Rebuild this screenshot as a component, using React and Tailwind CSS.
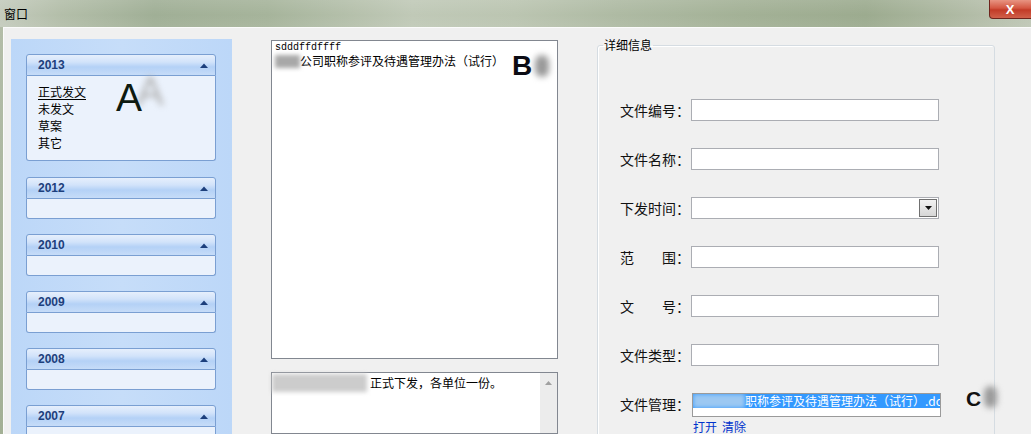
import React from "react";

const cjk = { fontFamily: '"Noto Sans CJK SC", "Liberation Sans", sans-serif' };
const arial = { fontFamily: '"Liberation Sans", Arial, sans-serif' };
const mono = { fontFamily: '"Liberation Mono", "DejaVu Sans Mono", monospace' };

function UpTriangle() {
  return (
    <svg width="8" height="5" viewBox="0 0 8 5">
      <path d="M0 5 L4 0.5 L8 5 Z" fill="#1d3f7c" />
    </svg>
  );
}

function YearGroup({ year, open, className = "" }) {
  return (
    <div className={"flex flex-col " + className}>
      <div className="h-[22px] flex items-center justify-between pl-[11px] pr-[7px] border border-[#7a9fd2] rounded-t-[3px] bg-[linear-gradient(to_bottom,#e6effc_0%,#d2e3fa_35%,#b4d1f6_60%,#c6dcf8_100%)]">
        <span className="text-[12px] font-bold text-[#1d3f7c]" style={arial}>
          {year}
        </span>
        <UpTriangle />
      </div>
      {open ? (
        <div
          className="h-[85px] border border-t-0 border-[#7a9fd2] rounded-b-[3px] bg-[#ebf2fc] pl-[11px] pt-[7px] text-[12px] leading-[17px] text-black flex flex-col relative"
          style={cjk}
        >
          <span className="underline underline-offset-2">正式发文</span>
          <span>未发文</span>
          <span>草案</span>
          <span>其它</span>
          <span className="absolute left-[110px] top-[-5px] text-[40px] leading-none text-[#b0b0b0] blur-[3px]" style={arial}>
            A
          </span>
          <span className="absolute left-[89px] top-[2px] text-[39px] leading-none text-[#0d1a10]" style={arial}>
            A
          </span>
        </div>
      ) : (
        <div className="h-[20px] border border-t-0 border-[#7a9fd2] rounded-b-[3px] bg-[#ebf2fc]" />
      )}
    </div>
  );
}

function Field({ label, children }) {
  return (
    <div className="flex items-center h-[22px]">
      <span className="w-[71px] shrink-0 text-[14px] text-[#111] whitespace-pre" style={cjk}>
        {label}
      </span>
      {children || <div className="w-[248px] h-[22px] border border-[#abadb3] bg-white" />}
    </div>
  );
}

export default function App() {
  return (
    <div className="w-[1031px] h-[434px] overflow-hidden flex flex-col bg-[#f0f0f0] relative">
      {/* title bar */}
      <div className="h-[27px] shrink-0 relative bg-[linear-gradient(to_right,#c4cbbd_0%,#b3bea9_6%,#a0af96_15%,#a6b49b_26%,#c0c9b7_40%,#bbc5b1_50%,#aebaa3_60%,#a3b196_72%,#9cab8f_84%,#adb8a1_92%,#bfc7b6_100%)]">
        <div className="absolute inset-0 bg-[linear-gradient(to_bottom,rgba(255,255,255,0.1),rgba(255,255,255,0)_55%,rgba(255,255,255,0.06))]" />
        <span className="absolute left-[4px] top-[5px] text-[12px] text-black" style={cjk}>
          窗口
        </span>
        <div className="absolute right-[-3px] top-0 w-[45px] h-[19px] rounded-bl-[4px] border border-t-0 border-[#6e241c] bg-[linear-gradient(to_bottom,#e89482_0%,#d45742_45%,#c23b27_55%,#d0604a_100%)] flex items-center justify-center">
          <span className="text-white font-bold text-[13px] leading-none pr-[3px]" style={arial}>
            X
          </span>
        </div>
      </div>

      {/* window body */}
      <div className="flex-1 flex min-h-0">
        <div className="w-[3px] shrink-0 bg-[linear-gradient(to_bottom,#b3bda8,#a3b095)]" />
        <div className="flex-1 flex border-l border-t border-[#fbfbfb] bg-[#f0f0f0] min-h-0">
          {/* left panel */}
          <div className="ml-[7px] mt-[11px] w-[221px] shrink-0 bg-[linear-gradient(to_right,#bcd7f8,#c6ddf9_50%,#bcd7f8)] pl-[15px] pr-[16px] pt-[15px] flex flex-col gap-[15px] overflow-hidden">
            <YearGroup year="2013" open />
            <YearGroup year="2012" className="mt-px" />
            {["2010", "2009", "2008", "2007"].map((y) => (
              <YearGroup key={y} year={y} />
            ))}
          </div>

          {/* middle column */}
          <div className="ml-[39px] mt-[12px] w-[287px] shrink-0 flex flex-col">
            <div className="h-[319px] border border-[#828790] bg-white pl-[3px] pt-[1px] relative">
              <div className="text-[10px] leading-[11px] text-black" style={mono}>
                sdddffdffff
              </div>
              <div className="flex items-center text-[12px] leading-[16px] text-black" style={cjk}>
                <span className="w-[25px] h-[13px] bg-[#a8a8a8] blur-[2px]" />
                <span>公司职称参评及待遇管理办法（试行）</span>
              </div>
              <span className="absolute left-[240px] top-[11px] text-[28px] font-bold leading-none text-[#0c0c14]" style={arial}>
                B
              </span>
              <span className="absolute left-[263px] top-[14px] w-[14px] h-[22px] rounded-full bg-[#999] blur-[3px]" />
            </div>
            <div className="mt-[13px] flex-1 border border-[#828790] bg-white flex">
              <div className="flex-1 flex items-start text-[12px] leading-[18px] text-black pt-px" style={cjk}>
                <span className="w-[95px] h-[18px] bg-[#cccccc] blur-[2px]" />
                <span className="ml-[3px]">正式下发，各单位一份。</span>
              </div>
              <div className="w-[17px] bg-[#ececec] flex justify-center pt-[8px]">
                <svg width="7" height="4" viewBox="0 0 7 4">
                  <path d="M0 4 L3.5 0 L7 4 Z" fill="#a0a0a0" />
                </svg>
              </div>
            </div>
          </div>

          {/* right column */}
          <div className="ml-[39px] mt-[9px] w-[398px] shrink-0">
            <fieldset className="border border-[#d5dce2] rounded-[3px] h-[420px] pl-[22px] shadow-[inset_1px_1px_0_#ffffff]">
              <legend className="ml-[-17px] px-px text-[12px] leading-[16px] text-black" style={cjk}>
                详细信息
              </legend>
              <div className="pt-[46px] flex flex-col gap-[27px]">
                <Field label="文件编号：" />
                <Field label="文件名称：" />
                <Field label="下发时间：">
                  <div className="w-[248px] h-[22px] border border-[#abadb3] bg-white flex items-center justify-end pr-px">
                    <div className="w-[18px] h-[18px] border border-[#707070] bg-[linear-gradient(to_bottom,#f2f2f2,#d6d6d6)] flex items-center justify-center">
                      <svg width="7" height="4" viewBox="0 0 7 4">
                        <path d="M0 0 L7 0 L3.5 4 Z" fill="#111" />
                      </svg>
                    </div>
                  </div>
                </Field>
                <Field label="范　　围：" />
                <Field label="文　　号：" />
                <Field label="文件类型：" />
                <div className="flex flex-col">
                  <Field label="文件管理：">
                    <div className="w-[249px] h-[24px] ml-px mt-[2px] border border-[#9a9a9a] bg-white">
                      <div className="h-[14px] flex items-center overflow-hidden text-[12px] leading-[14px] text-white whitespace-nowrap bg-[#3399ff]" style={cjk}>
                        <span className="w-[52px] h-[14px] shrink-0 bg-[#9cc8f2] blur-[2px]" />
                        <span>职称参评及待遇管理办法（试行）.doc</span>
                      </div>
                    </div>
                  </Field>
                  <div className="ml-[73px] mt-[5px] flex gap-[5px] text-[12px] leading-[14px] text-[#0033cc]" style={cjk}>
                    <span>打开</span>
                    <span>清除</span>
                  </div>
                </div>
              </div>
            </fieldset>
          </div>
        </div>
      </div>

      {/* annotation C */}
      <span className="absolute left-[966px] top-[388px] text-[21px] font-bold leading-none text-[#111]" style={arial}>
        C
      </span>
      <span className="absolute left-[984px] top-[386px] w-[13px] h-[22px] rounded-full bg-[#9a9a9a] blur-[3px]" />
    </div>
  );
}
